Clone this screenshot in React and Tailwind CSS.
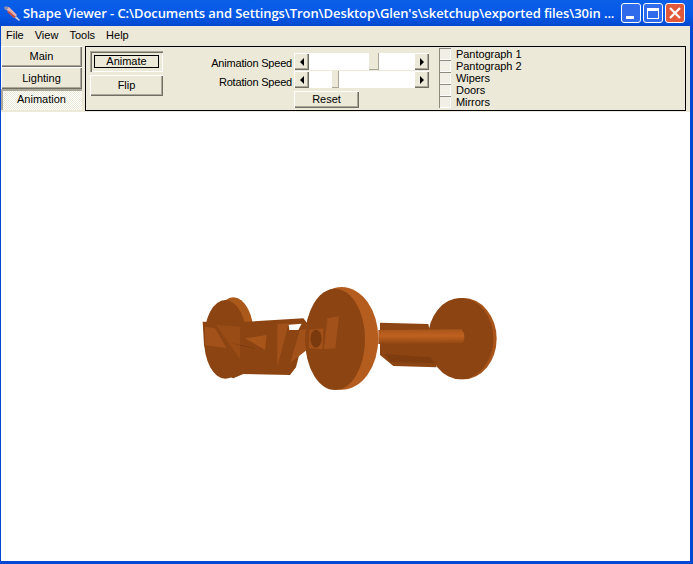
import React from 'react';

const raised = 'bg-[#ece9d8] shadow-[inset_1px_1px_0_#fff,inset_-1px_-1px_0_#716f64,inset_-2px_-2px_0_#aca899]';
const sunken = 'shadow-[inset_1px_1px_0_#aca899,inset_2px_2px_0_#716f64,inset_-1px_-1px_0_#fff]';

const Tab = ({ label, active, className }) => (
  <div
    className={`w-[81px] flex items-center justify-center ${className} ${
      active
        ? `bg-[repeating-conic-gradient(#fff_0_25%,#ece9d8_0_50%)] bg-[length:2px_2px] shadow-[inset_2px_2px_0_#aca899]`
        : raised
    }`}
  >
    {label}
  </div>
);

const Arrow = ({ dir }) => (
  <div className={`w-[15px] h-full flex items-center justify-center ${raised}`}>
    <svg width="4" height="8" viewBox="0 0 4 8">
      <path d={dir === 'left' ? 'M4 0 L0 4 L4 8 Z' : 'M0 0 L4 4 L0 8 Z'} fill="#000" />
    </svg>
  </div>
);

const Slider = ({ before, thumb, after }) => (
  <div className="flex w-[135px] h-[17px] bg-white">
    <Arrow dir="left" />
    <div className="h-full" style={{ width: before }} />
    <div className="h-full bg-[#ece9d8] shadow-[inset_-1px_-1px_0_#aca899]" style={{ width: thumb }} />
    <div className="h-full" style={{ width: after }} />
    <Arrow dir="right" />
  </div>
);

const Check = ({ label }) => (
  <div className="flex items-center h-[12px]">
    <div className="w-[12px] h-[12px] bg-[#f2f0e6] shadow-[inset_1px_1px_0_#8c8a7c,inset_-1px_-1px_0_#fff]" />
    <span className="ml-[5px] leading-[12px] tracking-[-0.05px]">{label}</span>
  </div>
);

const WinBtn = ({ className, children }) => (
  <div className={`w-[20px] h-[20px] rounded-[3px] border border-white flex items-center justify-center ${className}`}>
    {children}
  </div>
);

const Bogie = () => (
  <svg width="320" height="120" viewBox="0 0 960 360">
    <defs>
      <linearGradient id="axle" x1="0" y1="0" x2="0" y2="1">
        <stop offset="0" stopColor="#a9551a" />
        <stop offset="0.45" stopColor="#bf6120" />
        <stop offset="1" stopColor="#8f4612" />
      </linearGradient>
    </defs>
    {/* far wheel */}
    <ellipse cx="820" cy="176" rx="100" ry="122" fill="#a8541a" />
    <ellipse cx="812" cy="176" rx="98" ry="122" fill="#8b4412" />
    <path d="M570 128 L715 132 L740 262 L610 258 L570 225 Z" fill="#8b4412" />
    <path d="M585 222 L720 232 L735 250 L600 245 Z" fill="#7e3c0f" />
    <path d="M565 150 L815 148 Q830 168 818 190 L565 192 Z" fill="url(#axle)" />
    {/* near left wheel */}
    <ellipse cx="130" cy="170" rx="62" ry="118" fill="#ab581b" />
    <ellipse cx="106" cy="178" rx="64" ry="118" fill="#8b4412" />
    {/* frame */}
    <path d="M38 125 L120 128 L340 115 L352 130 L318 262 L300 285 L160 282 L130 295 L100 285 L42 195 Z" fill="#8b4412" />
    <path d="M45 140 L75 145 L110 205 L45 195 Z" fill="#a3511a" />
    <path d="M78 135 L150 140 L150 238 Z" fill="#9a4c16" />
    <path d="M165 175 L230 165 L225 210 Z" fill="#a8551a" />
    <path d="M120 188 L225 212 L150 196 Z" fill="#5c2c0a" />
    <path d="M262 132 L296 130 L262 262 Z" fill="#a3511a" />
    <path d="M296 134 L335 131 L325 150 L298 150 Z" fill="#fff" />
    <path d="M330 150 L360 145 L350 210 L300 250 Z" fill="#a3511a" />
    {/* middle wheel */}
    <ellipse cx="455" cy="175" rx="110" ry="154" fill="#b55d1f" />
    <ellipse cx="435" cy="178" rx="90" ry="152" fill="#8b4412" />
    <path d="M358 150 L400 145 L398 208 L356 205 Z" fill="#a3511a" />
    <ellipse cx="378" cy="176" rx="17" ry="27" fill="#7a3a0e" />
    <path d="M412 115 L447 108 L436 205 L402 208 Z" fill="#a3511a" />
  </svg>
);

const App = () => (
  <div className="w-[693px] h-[564px] overflow-hidden flex flex-col bg-[#0348d4] font-['Liberation_Sans',sans-serif] text-[11px] text-black">
    {/* title bar */}
    <div className="h-[26px] shrink-0 flex items-center pl-[3px] pr-[8px] bg-[linear-gradient(#0a5fe8,#0558e6_60%,#0349cf)]">
      <svg width="18" height="18" viewBox="0 0 18 18" className="shrink-0">
        <path d="M2 4 L6 3 L14 11 L11 14 Z" fill="#e6b0b0" />
        <path d="M6 7 L13 13 L11 14 L4 8 Z" fill="#c2504a" />
        <path d="M13 12 L17 16 L16 17 L12 14 Z" fill="#c8ccd8" />
        <path d="M1 3 L4 2 L5 5 L2 6 Z" fill="#8a90a8" />
      </svg>
      <span className="ml-[2px] text-[13px] leading-[18px] font-semibold text-white whitespace-nowrap font-['Open_Sans',sans-serif] tracking-[-0.09px]">
        {"Shape Viewer - C:\\Documents and Settings\\Tron\\Desktop\\Glen's\\sketchup\\exported files\\30in ..."}
      </span>
      <div className="flex gap-[2px] ml-auto shrink-0">
        <WinBtn className="bg-[#2f6bea]">
          <div className="w-[8px] h-[3px] bg-white mt-[9px] mr-[3px]" />
        </WinBtn>
        <WinBtn className="bg-[#2f6bea]">
          <div className="w-[12px] h-[11px] border border-white border-t-[3px]" />
        </WinBtn>
        <WinBtn className="bg-[#e2593a]">
          <svg width="12" height="12" viewBox="0 0 12 12">
            <path d="M1 1 L11 11 M11 1 L1 11" stroke="#fff" strokeWidth="2.2" />
          </svg>
        </WinBtn>
      </div>
    </div>

    {/* client area */}
    <div className="flex-1 flex flex-col ml-[1px] mr-[3px] mb-[3px] min-h-0">
      <div className="h-[18px] shrink-0 bg-[#ece9d8] flex items-center pl-[5px] gap-[11px]">
        <span>File</span>
        <span>View</span>
        <span>Tools</span>
        <span>Help</span>
      </div>

      <div className="h-[68px] shrink-0 bg-[#ece9d8] flex pt-[2px]">
        <div className="w-[84px] shrink-0 flex flex-col">
          <Tab label="Main" className="h-[21px]" />
          <Tab label="Lighting" className="h-[22px]" />
          <Tab label="Animation" active className="h-[21px]" />
        </div>

        <div className="w-[601px] h-[65px] border border-black flex">
          <div className="w-[80px] shrink-0 pl-[4px] pt-[4px]">
            <div className={`w-[73px] h-[21px] flex items-center justify-center ${sunken}`}>
              <div className="w-[65px] h-[13px] border border-black flex items-center justify-center leading-none">Animate</div>
            </div>
            <div className={`w-[73px] h-[21px] mt-[3px] flex items-center justify-center ${raised}`}>Flip</div>
          </div>

          <div className="w-[126px] shrink-0 pt-[6px] text-right leading-[20px] tracking-[-0.2px]">
            <div>Animation Speed</div>
            <div className="-mt-[1px]">Rotation Speed</div>
          </div>

          <div className="w-[147px] shrink-0 pl-[2px] pt-[6px] flex flex-col gap-[1px]">
            <Slider before={60} thumb={10} after={35} />
            <Slider before={23} thumb={7} after={75} />
            <div className={`w-[65px] h-[17px] mt-[2px] flex items-center justify-center ${raised}`}>Reset</div>
          </div>

          <div className="pt-[1px] flex flex-col">
            <Check label="Pantograph 1" />
            <Check label="Pantograph 2" />
            <Check label="Wipers" />
            <Check label="Doors" />
            <Check label="Mirrors" />
          </div>
        </div>
      </div>

      <div className="flex-1 bg-white pl-[189px] pt-[168px] min-h-0">
        <Bogie />
      </div>
    </div>
  </div>
);

export default App;
